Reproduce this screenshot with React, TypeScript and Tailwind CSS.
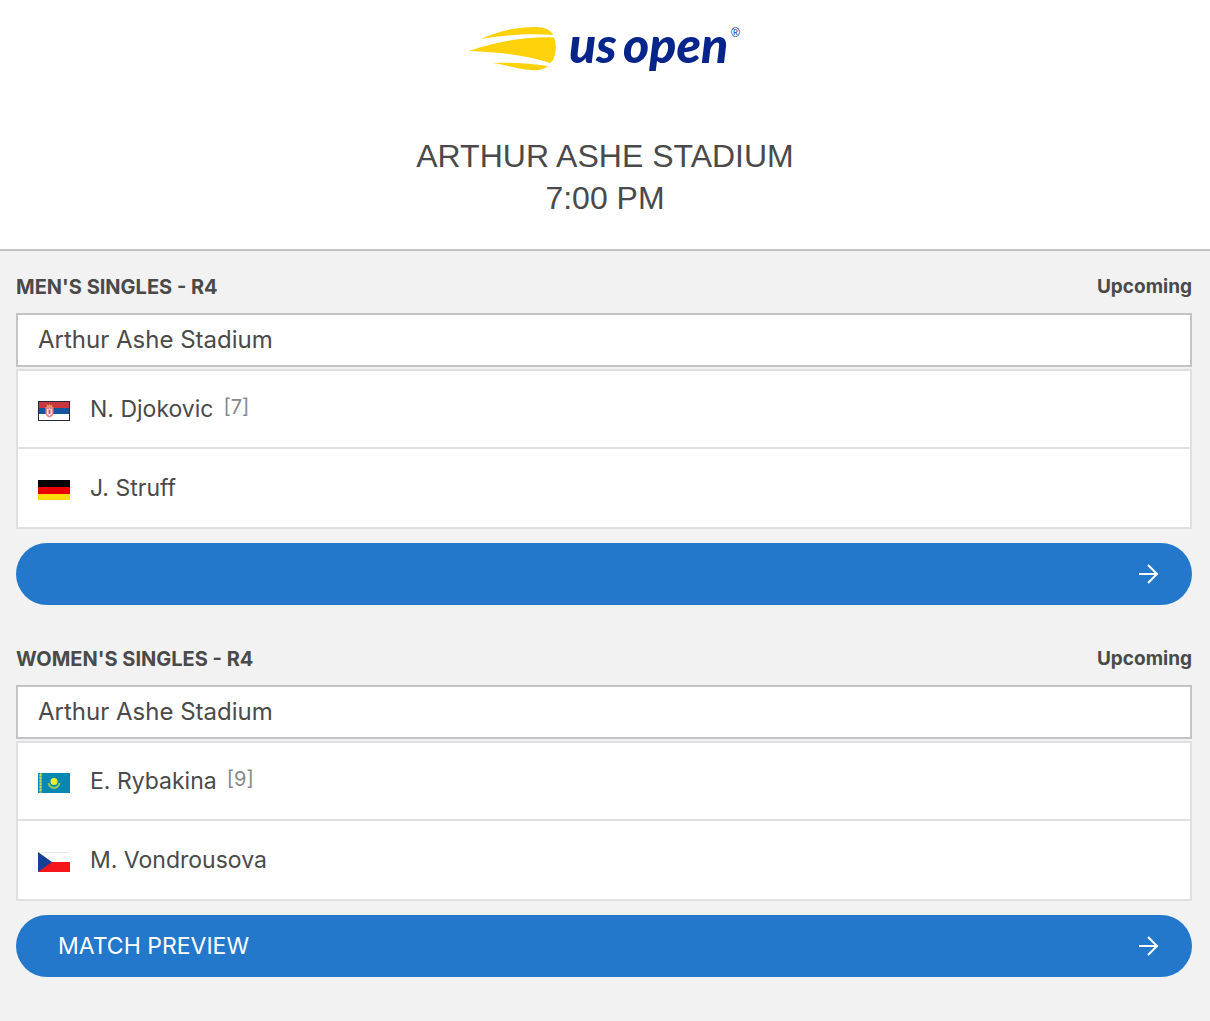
import type { ReactNode } from "react";

type Player = { name: string; seed?: number; flag: ReactNode };
type Match = { id: string; event: string; status: string; court: string; players: Player[]; action: string; actionHidden?: boolean };

const flagClass = "h-5 w-8 shrink-0";

function SerbiaFlag() {
  return (
    <svg viewBox="0 0 32 20" className={flagClass} role="img" aria-label="Serbia">
      <rect width="32" height="20" fill="#fff" />
      <rect width="32" height="7" fill="#c8373f" />
      <rect y="7" width="32" height="6" fill="#15559d" />
      <path d="M7.500 6h8v6q0 3-4 4.500Q7.500 15 7.500 12z" fill="#e0868a" />
      <path d="M9 8l2 1 .5-2 .5 2 2-1-.6 3 1 2-2 .5-1 2-1-2-2-.5 1-2z" fill="#fff" />
      <path d="M10.500 9h2v4h-2z" fill="#d8474e" />
      <path d="M9 6l-.5-2.500 2 1 1-1.500 1 1.500 2-1L14 6z" fill="#e8984c" />
      <rect x=".5" y=".5" width="31" height="19" fill="none" stroke="#282838" />
    </svg>
  );
}

function GermanyFlag() {
  return (
    <svg viewBox="0 0 32 20" className={flagClass} role="img" aria-label="Germany">
      <rect width="32" height="7" fill="#000" />
      <rect y="7" width="32" height="7" fill="#e90000" />
      <rect y="14" width="32" height="6" fill="#ffdc0c" />
    </svg>
  );
}

function KazakhstanFlag() {
  return (
    <svg viewBox="0 0 32 20" className={flagClass} role="img" aria-label="Kazakhstan">
      <rect width="32" height="20" fill="#0788b2" />
      <path d="M2.500 0v20" stroke="#7fc070" strokeWidth="2" />
      <path d="M2.500 1v18" stroke="#c5e04a" strokeWidth="2" strokeDasharray="2 1" />
      <circle cx="16" cy="8.500" r="3.500" fill="#e6f22c" />
      <path d="M10.500 10q1 4.500 5.500 5 4.500-.5 5.500-5" fill="none" stroke="#8cc960" strokeWidth="2" />
    </svg>
  );
}

function CzechFlag() {
  return (
    <svg viewBox="0 0 32 20" className={flagClass} role="img" aria-label="Czech Republic">
      <rect width="32" height="20" fill="#fff" />
      <path d="M0 .5h32" stroke="#e4ece8" />
      <rect y="10" width="32" height="10" fill="#f4161b" />
      <path d="M0 0l14 10L0 20z" fill="#173f96" />
    </svg>
  );
}

const matches: Match[] = [
  {
    id: "mens",
    event: "MEN'S SINGLES - R4",
    status: "Upcoming",
    court: "Arthur Ashe Stadium",
    players: [
      { name: "N. Djokovic", seed: 7, flag: <SerbiaFlag /> },
      { name: "J. Struff", flag: <GermanyFlag /> },
    ],
    action: "Match details",
    actionHidden: true,
  },
  {
    id: "womens",
    event: "WOMEN'S SINGLES - R4",
    status: "Upcoming",
    court: "Arthur Ashe Stadium",
    players: [
      { name: "E. Rybakina", seed: 9, flag: <KazakhstanFlag /> },
      { name: "M. Vondrousova", flag: <CzechFlag /> },
    ],
    action: "MATCH PREVIEW",
  },
];

function Logo() {
  return (
    <svg viewBox="0 -8 274 72" className="h-[72px] w-[274px]" role="img" aria-label="US Open">
      <g fill="#fdd20a">
        <path d="M13 19C29 11 49 7 67 7c10 0 16 3 18 8C61 13 39 15 13 19z" />
        <path d="M1 31C27 22 59 16 86 17.500q3 7.500 1 16.500-2 8-5 9C62 36 33 32 1 31z" />
        <path d="M25 43c18-1 37 0 55 3-5 4-10 5-17 4-13-1-24-5-38-7z" />
      </g>
      <g fill="#06258a" fontFamily="Lato" fontStyle="italic">
        <text x="101" y="43" fontSize="50" fontWeight="900">us</text>
        <text x="155" y="43" fontSize="50" fontWeight="900">open</text>
        <text x="263" y="17" fontSize="12" fontStyle="normal" fontFamily="Liberation Sans">®</text>
      </g>
    </svg>
  );
}

function MatchCard({ match }: { match: Match }) {
  return (
    <section aria-labelledby={match.id}>
      <div className="flex h-[62px] items-center justify-between pt-2.5 font-bold">
        <h2 id={match.id} className="text-[20px]">{match.event}</h2>
        <span className="text-[19px]">{match.status}</span>
      </div>
      <div className="border-2 border-[#c1c3c4] bg-white px-5 py-[9px] text-[24px] leading-8">{match.court}</div>
      <ul className="mt-0.5 divide-y-2 divide-[#e0e0e2] border-2 border-[#e0e0e2] bg-white">
        {match.players.map((player) => (
          <li key={player.name} className="flex h-[78px] items-center px-5">
            <span className="mt-1">{player.flag}</span>
            <span className="ml-5 text-[23px] leading-8">{player.name}</span>
            {player.seed && <span className="mb-1 ml-2.5 text-[20px] leading-7 text-[#88898b]">[{player.seed}]</span>}
          </li>
        ))}
      </ul>
      <button
        type="button"
        aria-label={match.action}
        className="mt-3.5 flex h-[62px] w-full items-center rounded-full bg-[#2378cb] pr-8 pl-[42px] text-[23px] text-white"
      >
        {!match.actionHidden && <span>{match.action}</span>}
        <svg viewBox="0 0 22 22" className="ml-auto size-[22px]" fill="none" stroke="currentColor" strokeWidth="2" aria-hidden="true">
          <path d="M1 11h18M10 2l9 9-9 9" />
        </svg>
      </button>
    </section>
  );
}

export default function App() {
  return (
    <div className="min-h-screen bg-[#f2f2f2] font-['Inter',sans-serif] text-[#4a4a4a]">
      <header className="flex flex-col items-center border-b-2 border-[#c3c3c3] bg-white pt-3 pb-[30px]">
        <Logo />
        <h1 className="mt-[51px] text-center font-['Liberation_Sans',sans-serif] text-[32px] leading-[42px]">
          ARTHUR ASHE STADIUM
          <br />
          7:00 PM
        </h1>
      </header>
      <main className="flex flex-col gap-[18px] pr-[18px] pb-11 pl-4">
        {matches.map((match) => (
          <MatchCard key={match.id} match={match} />
        ))}
      </main>
    </div>
  );
}
